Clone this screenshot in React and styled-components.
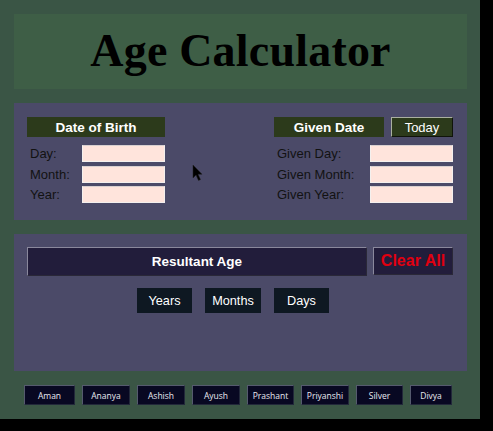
import React from "react";
import styled, { createGlobalStyle } from "styled-components";

const Global = createGlobalStyle`
  html, body { margin: 0; padding: 0; background: #000; }
  body { width: 493px; height: 431px; overflow: hidden; font-family: "Liberation Sans", Arial, sans-serif; }
`;

const Frame = styled.div`
  position: relative;
  width: 480px;
  height: 419px;
  box-sizing: border-box;
  background: #3a5545;
  padding: 14px 13px 0 14px;
  display: flex;
  flex-direction: column;
`;

const TitleBar = styled.div`
  height: 75px;
  background: #3e5e46;
  display: flex;
  align-items: center;
  justify-content: center;
`;

const Title = styled.h1`
  margin: 0;
  font-family: "Liberation Serif", "Times New Roman", serif;
  font-weight: bold;
  font-size: 46px;
  color: #000;
  letter-spacing: 0.2px;
  line-height: 1;
  padding-bottom: 2px;
`;

const Panel = styled.div`
  margin-top: ${(p) => p.$mt}px;
  height: ${(p) => p.$h}px;
  background: #4b4a68;
  box-sizing: border-box;
  padding: 13px 14px 0 13px;
`;

const DateRow = styled.div`
  display: flex;
  justify-content: space-between;
`;

const Column = styled.div`
  display: flex;
  flex-direction: column;
`;

const HeadRow = styled.div`
  display: flex;
  gap: 7px;
  margin-bottom: 8px;
  margin-top: 1px;
`;

const Header = styled.div`
  width: ${(p) => p.$w}px;
  height: 20px;
  background: #2c3a1b;
  color: #fff;
  font-weight: bold;
  font-size: 13.5px;
  display: flex;
  align-items: center;
  justify-content: center;
`;

const TodayBtn = styled.div`
  width: 62px;
  height: 20px;
  box-sizing: border-box;
  background: #2c3a1b;
  border: 1px solid #aab0a0;
  border-right-color: #10140a;
  border-bottom-color: #10140a;
  color: #fff;
  font-size: 13px;
  display: flex;
  align-items: center;
  justify-content: center;
`;

const Field = styled.div`
  display: flex;
  align-items: center;
  justify-content: space-between;
  padding-left: ${(p) => p.$pl || 3}px;
  height: 17px;
  margin-bottom: ${(p) => (p.$last ? 0 : 3.5)}px;
`;

const Label = styled.span`
  font-size: 13px;
  color: #121212;
`;

const Input = styled.div`
  width: 83px;
  height: 17px;
  box-sizing: border-box;
  background: #ffe4dc;
  border: 1px solid #f4f0ee;
  border-top-color: #d8d0d0;
`;

const ResultRow = styled.div`
  display: flex;
  gap: 6px;
  height: 29px;
`;

const ResultBox = styled.div`
  width: 340px;
  box-sizing: border-box;
  background: #221d3b;
  border: 1px solid #8a889c;
  border-right-color: #2a2838;
  border-bottom-color: #2a2838;
  color: #fff;
  font-weight: bold;
  font-size: 13.5px;
  display: flex;
  align-items: center;
  justify-content: center;
`;

const ClearBtn = styled.div`
  width: 80px;
  height: 28px;
  box-sizing: border-box;
  background: #221d3b;
  border: 1px solid #8a889c;
  border-right-color: #2a2838;
  border-bottom-color: #2a2838;
  color: #e00010;
  font-weight: bold;
  font-size: 16px;
  display: flex;
  align-items: center;
  justify-content: center;
`;

const UnitRow = styled.div`
  display: flex;
  gap: 13px;
  margin-top: 12px;
  padding-left: 110px;
`;

const Unit = styled.div`
  width: ${(p) => p.$w}px;
  height: 25px;
  background: #0e1822;
  color: #fff;
  font-size: 12.7px;
  display: flex;
  align-items: center;
  justify-content: center;
`;

const NameRow = styled.div`
  display: flex;
  gap: 7px;
  margin-top: 14px;
  padding-left: 10px;
`;

const NameBtn = styled.div`
  width: ${(p) => p.$w}px;
  height: 20px;
  box-sizing: border-box;
  background: #080822;
  border: 1px solid #555a6e;
  border-right-color: #22283a;
  border-bottom-color: #22283a;
  color: #e8e8f0;
  font-family: "Open Sans", "DejaVu Sans", sans-serif;
  font-size: 8.5px;
  display: flex;
  align-items: center;
  justify-content: center;
`;

const Cursor = styled.svg`
  position: absolute;
  left: 192px;
  top: 164px;
`;

const names = [
  ["Aman", 51],
  ["Ananya", 48],
  ["Ashish", 48],
  ["Ayush", 48],
  ["Prashant", 47],
  ["Priyanshi", 48],
  ["Silver", 47],
  ["Divya", 42],
];

export default function App() {
  return (
    <>
      <Global />
      <Frame>
        <TitleBar>
          <Title>Age Calculator</Title>
        </TitleBar>
        <Panel $mt={14} $h={117}>
          <DateRow>
            <Column>
              <HeadRow>
                <Header $w={138}>Date of Birth</Header>
              </HeadRow>
              <Field><Label>Day:</Label><Input /></Field>
              <Field><Label>Month:</Label><Input /></Field>
              <Field $last><Label>Year:</Label><Input /></Field>
            </Column>
            <Column>
              <HeadRow>
                <Header $w={110}>Given Date</Header>
                <TodayBtn>Today</TodayBtn>
              </HeadRow>
              <Field><Label>Given Day:</Label><Input /></Field>
              <Field><Label>Given Month:</Label><Input /></Field>
              <Field $last><Label>Given Year:</Label><Input /></Field>
            </Column>
          </DateRow>
        </Panel>
        <Panel $mt={14} $h={137}>
          <ResultRow>
            <ResultBox>Resultant Age</ResultBox>
            <ClearBtn>Clear All</ClearBtn>
          </ResultRow>
          <UnitRow>
            <Unit $w={55}>Years</Unit>
            <Unit $w={56}>Months</Unit>
            <Unit $w={55}>Days</Unit>
          </UnitRow>
        </Panel>
        <NameRow>
          {names.map(([n, w]) => (
            <NameBtn key={n} $w={w}>{n}</NameBtn>
          ))}
        </NameRow>
        <Cursor width="12" height="18" viewBox="0 0 12 18">
          <path d="M1 1 L1 14 L4 11 L6.5 16.5 L8.5 15.6 L6 10.2 L10 10.2 Z" fill="#000" stroke="#222" strokeWidth="0.5" />
        </Cursor>
      </Frame>
    </>
  );
}
